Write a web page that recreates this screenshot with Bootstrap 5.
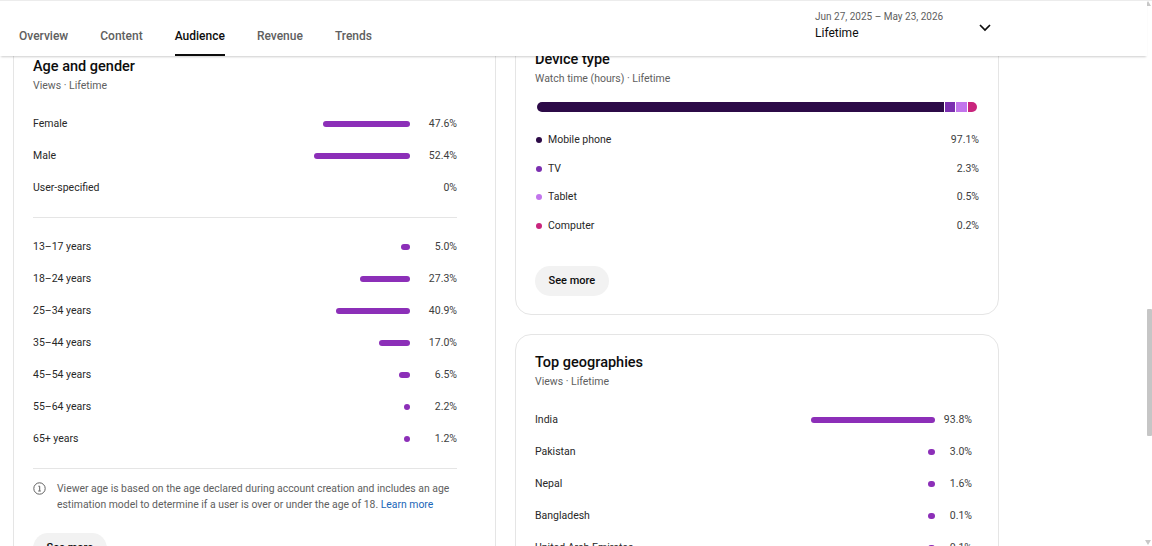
<!DOCTYPE html>
<html lang="en">
<head>
<meta charset="utf-8">
<title>Audience</title>
<link href="https://cdn.jsdelivr.net/npm/bootstrap@5.3.0/dist/css/bootstrap.min.css" rel="stylesheet">
<style>
html,body{height:546px;overflow:hidden;background:#fff}
body{font-family:Roboto,"Liberation Sans",sans-serif;color:#0d0d0d;position:relative}
.top-edge{height:1px;background:#ececec}
.app-head{position:relative;z-index:5;height:55px;width:1147px;background:#fff;box-shadow:0 2px 2px -1px rgba(0,0,0,.2)}
.tab-list{gap:32px;padding-left:19px}
.tab-item{height:55px;line-height:70px;font-size:12px;font-weight:500;color:#606060;text-decoration:none;box-sizing:border-box}
.tab-item.on{color:#0d0d0d;border-bottom:2px solid #0d0d0d}
.range-wrap{margin-left:auto;margin-right:155px}
.range-box{width:163px;padding-top:8px}
.range-dates{font-size:10px;line-height:15px;color:#606060}
.range-name{font-size:12px;line-height:18px;color:#0d0d0d}
.range-chevron{margin-top:22px}
.scroll-area{height:490px;overflow:hidden;padding-left:13px;gap:19px}
.col-left{width:483px;flex:none;margin-top:-30px}
.col-right{width:484px;flex:none;margin-top:-30px}
.panel{border:1px solid #e5e5e5;border-radius:16px;background:#fff}
.panel-left{height:640px;padding:30px 38px 0 19px}
.panel-device{height:289px;padding:23px 19px 0 19px}
.panel-geo{height:400px;margin-top:19px;padding:18px 19px 0 19px}
.panel-title{font-size:14.5px;line-height:20px;font-weight:500;margin:0;color:#0d0d0d}
.panel-sub{font-size:10.5px;line-height:14px;color:#606060;margin-top:2px}
.stat-list{margin-top:15px}
.stat-row{height:32px;font-size:10.5px;color:#282828}
.stat-track{flex:1;display:flex;justify-content:flex-end}
.stat-bar{height:6px;border-radius:3px;background:#8c2fb8}
.stat-pct{width:47px;text-align:right;color:#404040}
.geo-list .stat-pct{width:37px}
.geo-list{margin-top:15px;padding-right:7px}
.rule{height:1px;background:#e5e5e5;margin:13px 0 13px}
.rule-end{margin:13px 0 12px}
.note-box{gap:11px;font-size:10.4px;line-height:16px;color:#606060}
.note-box a{color:#1a66b8;text-decoration:none}
.note-icon{flex:none;margin-top:1px}
.more-btn{font-size:11px;font-weight:500;line-height:16px;padding:7px 13.5px;border-radius:16px;background:#f2f2f2;color:#0d0d0d;border:0}
.note-more{margin-top:20px}
.mix-bar{height:10px;margin-top:16px;gap:1px;border-radius:5px;overflow:hidden;width:440px;margin-left:2px}
.mix-a{background:#2c0a47}.mix-b{background:#7b2fb0}.mix-c{background:#c275ec}.mix-d{background:#c9257d}
.mix-row{height:28.7px;font-size:10.5px;color:#282828}
.mix-dot{width:6px;height:6px;border-radius:50%;margin:0 6px 0 1px;flex:none}
.mix-pct{margin-left:auto;color:#404040}
.mix-list{margin-top:13.5px}
.mix-more{margin-top:26px}
.track-thumb{position:absolute;right:0;top:309px;width:5px;height:127px;background:#c6c6c6;border-radius:1px}
.track-up,.track-down{position:absolute;right:1px;width:0;height:0;border-left:3px solid transparent;border-right:3px solid transparent}
.track-up{top:1px;border-bottom:5px solid #c8c8c8}
.track-down{bottom:1px;border-top:5px solid #c8c8c8}
</style>
</head>
<body>
<div class="top-edge"></div>
<header class="app-head d-flex">
  <nav class="d-flex tab-list">
    <a class="tab-item" href="#">Overview</a>
    <a class="tab-item" href="#">Content</a>
    <a class="tab-item on" href="#">Audience</a>
    <a class="tab-item" href="#">Revenue</a>
    <a class="tab-item" href="#">Trends</a>
  </nav>
  <div class="range-wrap d-flex">
    <div class="range-box">
      <div class="range-dates">Jun 27, 2025 – May 23, 2026</div>
      <div class="range-name">Lifetime</div>
    </div>
    <svg class="range-chevron" width="14" height="10" viewBox="0 0 14 10"><path d="M2 2l5 5 5-5" fill="none" stroke="#0d0d0d" stroke-width="1.7"/></svg>
  </div>
</header>
<main class="scroll-area d-flex">
  <div class="col-left">
    <section class="panel panel-left">
      <h2 class="panel-title">Age and gender</h2>
      <div class="panel-sub">Views · Lifetime</div>
      <div class="stat-list">
        <div class="stat-row d-flex align-items-center"><span>Female</span><div class="stat-track"><div class="stat-bar" style="width:87px"></div></div><span class="stat-pct">47.6%</span></div>
        <div class="stat-row d-flex align-items-center"><span>Male</span><div class="stat-track"><div class="stat-bar" style="width:96px"></div></div><span class="stat-pct">52.4%</span></div>
        <div class="stat-row d-flex align-items-center"><span>User-specified</span><div class="stat-track"></div><span class="stat-pct">0%</span></div>
        <div class="rule"></div>
        <div class="stat-row d-flex align-items-center"><span>13–17 years</span><div class="stat-track"><div class="stat-bar" style="width:9px"></div></div><span class="stat-pct">5.0%</span></div>
        <div class="stat-row d-flex align-items-center"><span>18–24 years</span><div class="stat-track"><div class="stat-bar" style="width:50px"></div></div><span class="stat-pct">27.3%</span></div>
        <div class="stat-row d-flex align-items-center"><span>25–34 years</span><div class="stat-track"><div class="stat-bar" style="width:74px"></div></div><span class="stat-pct">40.9%</span></div>
        <div class="stat-row d-flex align-items-center"><span>35–44 years</span><div class="stat-track"><div class="stat-bar" style="width:31px"></div></div><span class="stat-pct">17.0%</span></div>
        <div class="stat-row d-flex align-items-center"><span>45–54 years</span><div class="stat-track"><div class="stat-bar" style="width:11px"></div></div><span class="stat-pct">6.5%</span></div>
        <div class="stat-row d-flex align-items-center"><span>55–64 years</span><div class="stat-track"><div class="stat-bar" style="width:6px"></div></div><span class="stat-pct">2.2%</span></div>
        <div class="stat-row d-flex align-items-center"><span>65+ years</span><div class="stat-track"><div class="stat-bar" style="width:6px"></div></div><span class="stat-pct">1.2%</span></div>
        <div class="rule rule-end"></div>
      </div>
      <div class="note-box d-flex">
        <svg class="note-icon" width="13" height="13" viewBox="0 0 13 13"><circle cx="6.5" cy="6.5" r="5.7" fill="none" stroke="#606060" stroke-width="1"/><path d="M5.4 4.2h1.3v4.6M5.2 9h2.6" fill="none" stroke="#606060" stroke-width="1"/></svg>
        <div>Viewer age is based on the age declared during account creation and includes an age estimation model to determine if a user is over or under the age of 18. <a href="#">Learn more</a></div>
      </div>
      <button class="btn more-btn note-more" type="button">See more</button>
    </section>
  </div>
  <div class="col-right">
    <section class="panel panel-device">
      <h2 class="panel-title">Device type</h2>
      <div class="panel-sub">Watch time (hours) · Lifetime</div>
      <div class="mix-bar d-flex">
        <div class="mix-a" style="width:407px"></div>
        <div class="mix-b" style="width:10px"></div>
        <div class="mix-c" style="width:11px"></div>
        <div class="mix-d" style="width:9px"></div>
      </div>
      <div class="mix-list">
        <div class="mix-row d-flex align-items-center"><span class="mix-dot mix-a"></span><span>Mobile phone</span><span class="mix-pct">97.1%</span></div>
        <div class="mix-row d-flex align-items-center"><span class="mix-dot mix-b"></span><span>TV</span><span class="mix-pct">2.3%</span></div>
        <div class="mix-row d-flex align-items-center"><span class="mix-dot mix-c"></span><span>Tablet</span><span class="mix-pct">0.5%</span></div>
        <div class="mix-row d-flex align-items-center"><span class="mix-dot mix-d"></span><span>Computer</span><span class="mix-pct">0.2%</span></div>
      </div>
      <button class="btn more-btn mix-more" type="button">See more</button>
    </section>
    <section class="panel panel-geo">
      <h2 class="panel-title">Top geographies</h2>
      <div class="panel-sub">Views · Lifetime</div>
      <div class="geo-list">
        <div class="stat-row d-flex align-items-center"><span>India</span><div class="stat-track"><div class="stat-bar" style="width:124px"></div></div><span class="stat-pct">93.8%</span></div>
        <div class="stat-row d-flex align-items-center"><span>Pakistan</span><div class="stat-track"><div class="stat-bar" style="width:7px"></div></div><span class="stat-pct">3.0%</span></div>
        <div class="stat-row d-flex align-items-center"><span>Nepal</span><div class="stat-track"><div class="stat-bar" style="width:7px"></div></div><span class="stat-pct">1.6%</span></div>
        <div class="stat-row d-flex align-items-center"><span>Bangladesh</span><div class="stat-track"><div class="stat-bar" style="width:7px"></div></div><span class="stat-pct">0.1%</span></div>
        <div class="stat-row d-flex align-items-center"><span>United Arab Emirates</span><div class="stat-track"><div class="stat-bar" style="width:7px"></div></div><span class="stat-pct">0.1%</span></div>
      </div>
    </section>
  </div>
</main>
<div class="track-up"></div>
<div class="track-thumb"></div>
<div class="track-down"></div>
</body>
</html>
